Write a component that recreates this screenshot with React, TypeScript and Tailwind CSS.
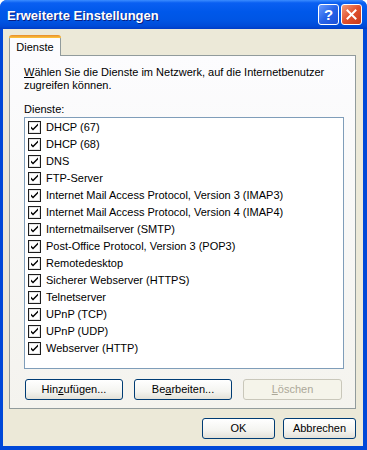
import React from "react";

const items = [
  "DHCP (67)",
  "DHCP (68)",
  "DNS",
  "FTP-Server",
  "Internet Mail Access Protocol, Version 3 (IMAP3)",
  "Internet Mail Access Protocol, Version 4 (IMAP4)",
  "Internetmailserver (SMTP)",
  "Post-Office Protocol, Version 3 (POP3)",
  "Remotedesktop",
  "Sicherer Webserver (HTTPS)",
  "Telnetserver",
  "UPnP (TCP)",
  "UPnP (UDP)",
  "Webserver (HTTP)",
];

function Check() {
  return (
    <svg width="13" height="13" viewBox="0 0 13 13" className="shrink-0">
      <rect x="0.5" y="0.5" width="12" height="12" fill="#fff" stroke="#1c1c1c" />
      <rect x="1.5" y="1.5" width="10" height="10" fill="none" stroke="#e4e4e4" />
      <path d="M3 5.5 L5 7.5 L10 2.5 L10 4.5 L5 9.5 L3 7.5 Z" fill="#000" />
    </svg>
  );
}

function Btn({ children, disabled, w }: { children: React.ReactNode; disabled?: boolean; w: string }) {
  return (
    <div
      className={`${w} h-[21px] flex items-center justify-center rounded-[3px] border ${
        disabled
          ? "border-[#c9c7ba] bg-[#f5f4ea] text-[#aca899]"
          : "border-[#003c74] bg-[linear-gradient(#ffffff,#f4f4f0_60%,#e3e1d8)] text-black"
      }`}
    >
      {children}
    </div>
  );
}

export default function App() {
  return (
    <div
      className="w-[367px] h-[450px] flex flex-col bg-[#0048d8] rounded-t-[7px] overflow-hidden text-[11px] leading-[13px] text-black"
      style={{ fontFamily: '"Liberation Sans", Arial, sans-serif' }}
    >
      {/* Title bar */}
      <div className="h-[29px] shrink-0 flex items-center pl-[7px] pr-[5px] bg-[linear-gradient(#3b8cff_0%,#0a5ff2_10%,#0058ea_40%,#0055e4_70%,#004bd8_90%,#003cc6_100%)]">
        <div
          className="flex-1 text-white font-bold text-[13px] pt-[1px]"
          style={{ textShadow: "1px 1px 0 #0a1e80" }}
        >
          Erweiterte Einstellungen
        </div>
        <div className="flex gap-[2px]">
          <div className="w-[21px] h-[21px] rounded-[3px] border border-white bg-[linear-gradient(135deg,#6b9cff,#2663e8_50%,#1a4fd8)] flex items-center justify-center text-white font-bold text-[15px]">
            ?
          </div>
          <div className="w-[21px] h-[21px] rounded-[3px] border border-white bg-[linear-gradient(135deg,#f39c7c,#e0502d_50%,#c8391a)] flex items-center justify-center">
            <svg width="11" height="11" viewBox="0 0 11 11">
              <path d="M1.5 1.5 L9.5 9.5 M9.5 1.5 L1.5 9.5" stroke="#fff" strokeWidth="2" strokeLinecap="square" />
            </svg>
          </div>
        </div>
      </div>

      {/* Body */}
      <div className="flex-1 flex flex-col ml-[3px] mr-[4px] mb-[4px] bg-[#ece9d8] pt-[7px] pl-[6px] pr-[7px]">
        {/* Tab */}
        <div className="flex">
          <div className="relative z-10 w-[52px] h-[20px] -mb-[1px] bg-[#fcfcfe] border-x border-[#919b9c] rounded-t-[3px] flex items-center justify-center pt-[2px]">
            <div className="absolute -top-px -left-px -right-px h-[3px] rounded-t-[3px] bg-[linear-gradient(#e68b2c,#ffc73c)]" />
            Dienste
          </div>
        </div>
        {/* Panel */}
        <div className="h-[354px] border border-[#919b9c] bg-[linear-gradient(#fcfcfe,#f4f3ee)] pt-[10px] pl-[14px] pr-[11px] flex flex-col">
          <div>
            <span className="underline">W</span>ählen Sie die Dienste im Netzwerk, auf die Internetbenutzer
            <br />
            zugreifen können.
          </div>
          <div className="mt-[11px]">Dienste:</div>
          <div className="mt-[1px] h-[252px] border border-[#7f9db9] bg-white pt-[1px]">
            {items.map((it) => (
              <div key={it} className="h-[17px] flex items-center pl-[3px] gap-[5px]">
                <Check />
                <span>{it}</span>
              </div>
            ))}
          </div>
          <div className="mt-[10px] flex gap-[11px] pl-[1px]">
            <Btn w="w-[98px]">
              Hin<span className="underline">z</span>ufügen...
            </Btn>
            <Btn w="w-[98px]">
              Be<span className="underline">a</span>rbeiten...
            </Btn>
            <Btn w="w-[99px]" disabled>
              <span className="underline">L</span>öschen
            </Btn>
          </div>
        </div>
        <div className="mt-[9px] flex justify-end gap-[8px] pr-[0px]">
          <div className="w-[73px] h-[21px] flex items-center justify-center rounded-[3px] border border-[#003c74] bg-[linear-gradient(#ffffff,#f4f4f0_60%,#e3e1d8)]">
            OK
          </div>
          <div className="w-[73px] h-[21px] flex items-center justify-center rounded-[3px] border border-[#003c74] bg-[linear-gradient(#ffffff,#f4f4f0_60%,#e3e1d8)]">
            Abbrechen
          </div>
        </div>
      </div>
    </div>
  );
}
